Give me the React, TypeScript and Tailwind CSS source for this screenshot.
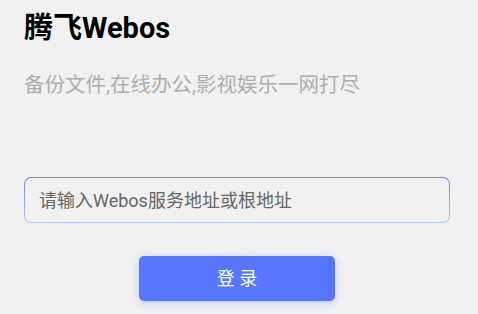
export default function App() {
  return (
    <div
      className="min-h-screen w-full bg-[#f1f1f1] pl-6 pr-7 pt-[8px]"
      style={{ fontFamily: 'Roboto, "Noto Sans CJK SC", sans-serif' }}
    >
      <h1 className="text-[29px] font-bold leading-[40px] text-black">腾飞Webos</h1>
      <p className="mt-[23px] text-[20.5px] leading-[28px] text-[#adadad]">
        备份文件,在线办公,影视娱乐一网打尽
      </p>

      <div className="mt-[78px] rounded-[7px] bg-gradient-to-b from-[#6684fa] to-[#b4c3ff] p-px">
        <input
          className="block h-[44px] w-full rounded-[6px] bg-[#f1f1f1] px-[14px] text-[18px] text-[#333333] outline-none placeholder:text-[#666666]"
          placeholder="请输入Webos服务地址或根地址"
        />
      </div>

      <div className="mt-[33px] flex justify-center">
        <button className="h-[45px] w-[196px] rounded-[5px] bg-[#5677fd] text-[18px] text-white shadow-[0_2px_8px_rgba(86,119,253,0.3)]">
          登 录
        </button>
      </div>
    </div>
  )
}
